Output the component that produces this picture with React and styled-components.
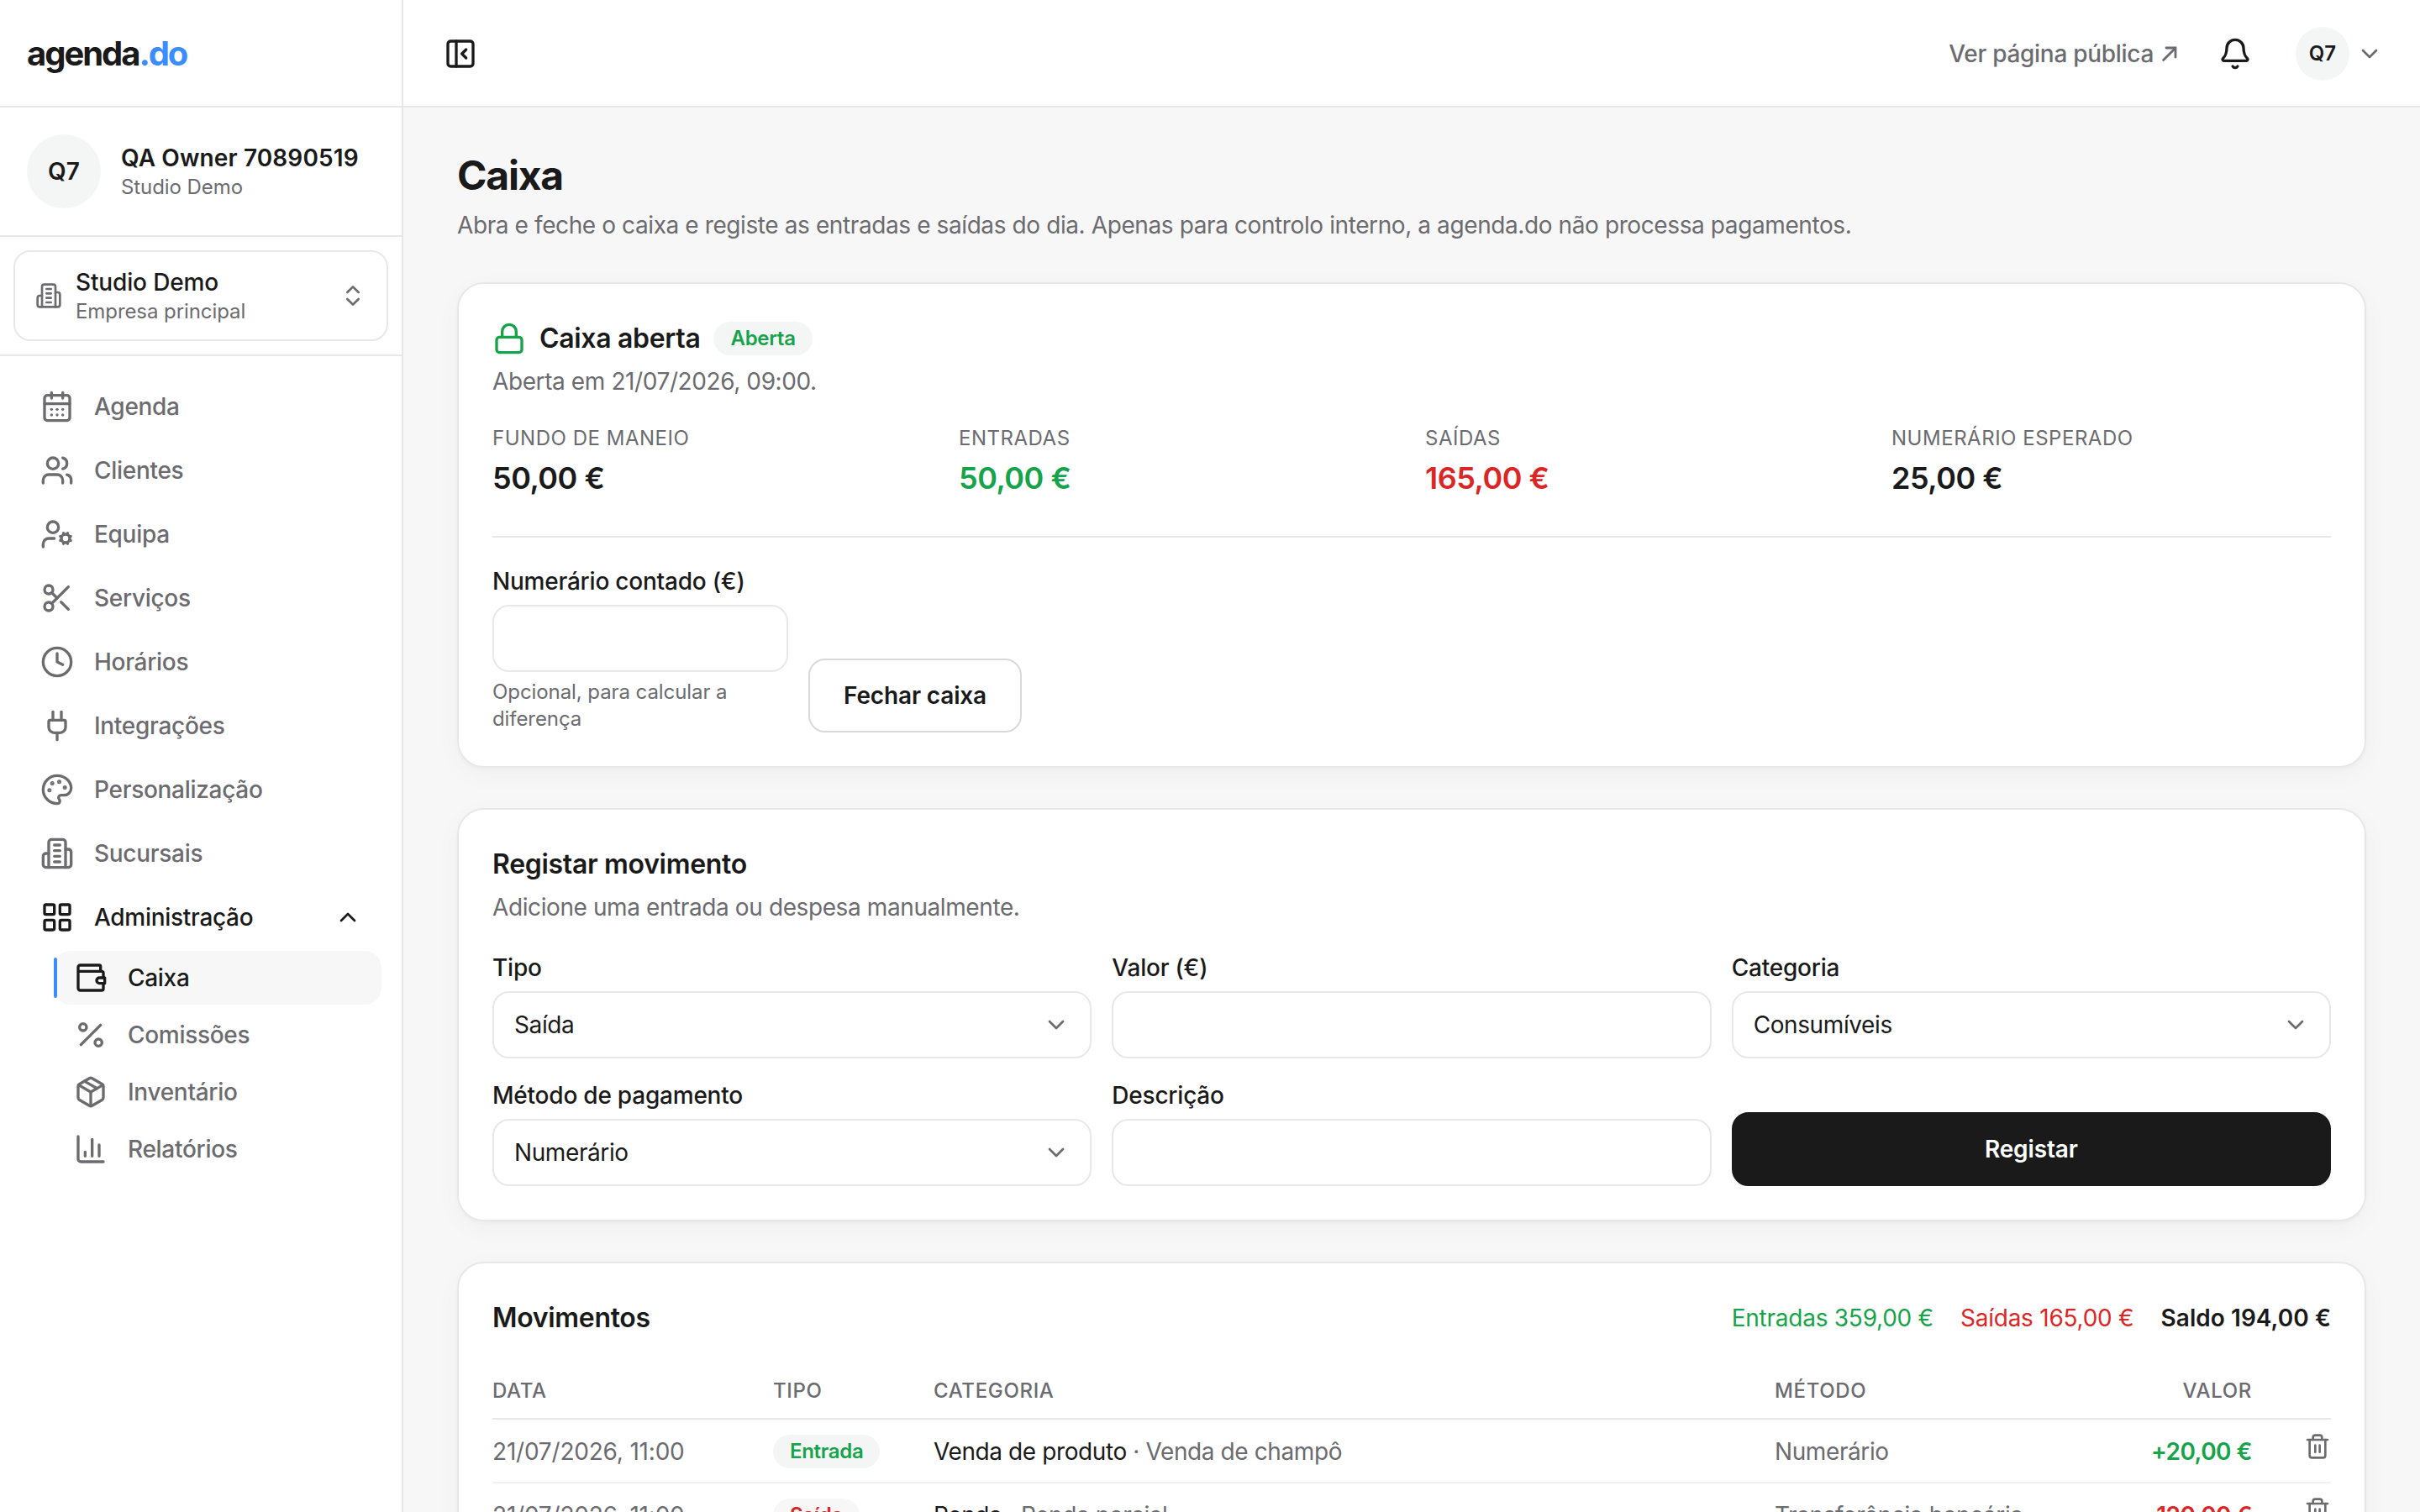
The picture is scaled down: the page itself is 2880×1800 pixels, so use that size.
import React from 'react';
import styled, { createGlobalStyle, css } from 'styled-components';
import {
  CalendarDays, Users, UserCog, Scissors, Clock, Plug, Palette, LayoutGrid,
  ChevronUp, ChevronDown, ChevronsUpDown, Percent, Package, PanelLeftClose, Bell, Lock, Trash2,
} from 'lucide-react';

const GlobalStyle = createGlobalStyle`
  *, *::before, *::after { box-sizing: border-box; }
  html, body { margin: 0; padding: 0; }
  body {
    width: 2880px;
    height: 1800px;
    overflow: hidden;
    background: #f7f7f7;
    color: #1a1a1a;
    font-family: Inter, "Liberation Sans", sans-serif;
    font-size: 28px;
    line-height: 40px;
    letter-spacing: -0.4px;
  }
  button, input { font: inherit; color: inherit; }
  h1, h2, p { margin: 0; }
  svg { display: block; flex: none; }
`;

const LINE = '#e8e8e8';
const MUTED = '#6b6b70';
const INK = '#1a1a1a';
const GREEN = '#16a34a';
const RED = '#dc2626';
const BLUE = '#3b8cff';

const tones = { ink: INK, green: GREEN, red: RED };

const Shell = styled.div`
  display: grid;
  grid-template-columns: 480px 1fr;
  height: 1800px;
`;

const Sidebar = styled.aside`
  display: flex;
  flex-direction: column;
  background: #fff;
  border-right: 2px solid ${LINE};
`;

const Brand = styled.div`
  display: flex;
  align-items: center;
  height: 128px;
  padding: 2px 32px 0;
  border-bottom: 2px solid ${LINE};
  font-size: 40px;
  font-weight: 700;
  letter-spacing: -2.05px;
  span { color: ${BLUE}; }
`;

const Profile = styled.div`
  display: flex;
  align-items: center;
  gap: 24px;
  padding: 32px;
  border-bottom: 2px solid ${LINE};
`;

const Avatar = styled.div`
  display: grid;
  place-items: center;
  flex: none;
  width: ${p => p.$size}px;
  height: ${p => p.$size}px;
  border-radius: 50%;
  background: #f4f6f6;
  font-size: ${p => p.$font}px;
  font-weight: 600;
  letter-spacing: 0;
`;

const Stack = styled.div`
  display: flex;
  flex-direction: column;
  flex: 1;
  min-width: 0;
  padding-top: 2px;
  white-space: nowrap;
`;

const Name = styled.div`
  font-size: 28px;
  line-height: 36px;
  font-weight: ${p => p.$weight};
  letter-spacing: ${p => (p.$weight > 500 ? '0.12px' : '-0.15px')};
`;

const Caption = styled.div`
  color: ${MUTED};
  font-size: 24px;
  line-height: 34px;
  letter-spacing: -0.08px;
`;

const BranchArea = styled.div`
  padding: 16px;
  border-bottom: 2px solid ${LINE};
`;

const BranchButton = styled.div`
  display: flex;
  align-items: center;
  gap: 16px;
  height: 108px;
  padding: 0 24px;
  border: 2px solid ${LINE};
  border-radius: 20px;
  svg { color: ${MUTED}; }
`;

const Nav = styled.nav`
  display: flex;
  flex-direction: column;
  gap: 4px;
  padding: 24px;
`;

const NavItem = styled.a`
  display: flex;
  align-items: center;
  gap: 24px;
  height: 72px;
  padding: 0 24px;
  color: ${p => (p.$active ? INK : MUTED)};
  font-weight: 500;
  letter-spacing: -0.3px;
  span { flex: 1; }
`;

const SubNav = styled.div`
  display: flex;
  flex-direction: column;
  gap: 4px;
  margin-left: 40px;
`;

const SubItem = styled(NavItem)`
  position: relative;
  height: 64px;
  border-radius: 20px;
  ${p => p.$active && css`
    background: #f7f7f7;
    &::before {
      content: '';
      position: absolute;
      left: 0;
      top: 8px;
      bottom: 8px;
      width: 4px;
      border-radius: 2px;
      background: ${BLUE};
    }
  `}
`;

const Main = styled.div`
  display: flex;
  flex-direction: column;
  min-width: 0;
  overflow: hidden;
`;

const TopBar = styled.header`
  display: flex;
  align-items: center;
  flex: none;
  height: 128px;
  padding: 0 44px 0 48px;
  background: #fff;
  box-shadow: inset 0 -2px 0 ${LINE};
`;

const PublicLink = styled.a`
  display: flex;
  align-items: center;
  gap: 10px;
  margin-left: auto;
  color: ${MUTED};
  font-weight: 500;
  letter-spacing: -0.3px;
`;

const BellButton = styled.div`
  margin: 0 52px 0 49px;
`;

const UserMenu = styled.div`
  display: flex;
  align-items: center;
  gap: 8px;
  svg { color: ${MUTED}; }
`;

const Content = styled.main`
  display: flex;
  flex-direction: column;
  gap: 48px;
  padding: 48px 64px 0;
`;

const PageHead = styled.div`
  height: 112px;
  padding-top: 1px;
`;

const PageTitle = styled.h1`
  font-size: 48px;
  line-height: 64px;
  font-weight: 700;
  letter-spacing: -0.025em;
`;

const PageText = styled.p`
  margin-top: 7px;
  color: ${MUTED};
  font-size: 28px;
  line-height: 40px;
`;

const Card = styled.section`
  flex: none;
  padding: 40px;
  border: 2px solid ${LINE};
  border-radius: 32px;
  background: #fff;
  box-shadow: 0 2px 4px rgba(0, 0, 0, 0.03), 0 8px 32px rgba(0, 0, 0, 0.03);
`;

const CardTitle = styled.h2`
  padding-top: 1px;
  font-size: 32px;
  line-height: 48px;
  font-weight: 600;
  letter-spacing: -0.01em;
`;

const CardText = styled.p`
  margin-top: 7px;
  color: ${MUTED};
  font-size: 28px;
  line-height: 40px;
`;

const StatusRow = styled.div`
  display: flex;
  align-items: center;
  gap: 16px;
  height: 49px;
  svg { color: ${GREEN}; }
`;

const Badge = styled.span`
  display: inline-flex;
  align-items: center;
  height: 40px;
  padding: 0 20px;
  border-radius: 20px;
  background: ${p => (p.$tone === 'red' ? '#f7f7f7' : '#f4f6f6')};
  color: ${p => tones[p.$tone]};
  font-size: 24px;
  font-weight: 600;
  letter-spacing: -0.3px;
`;

const Stats = styled.div`
  display: grid;
  grid-template-columns: repeat(4, 1fr);
  gap: 32px;
  height: 132px;
  margin-top: 32px;
`;

const StatLabel = styled.div`
  color: ${MUTED};
  font-size: 24px;
  line-height: 32px;
  letter-spacing: 0.52px;
  text-transform: uppercase;
`;

const StatValue = styled.div`
  margin-top: 7px;
  color: ${p => tones[p.$tone]};
  font-size: 36px;
  line-height: 48px;
  font-weight: 600;
  letter-spacing: -0.5px;
`;

const CloseRow = styled.div`
  display: flex;
  align-items: flex-end;
  gap: 24px;
  padding-top: 32px;
  border-top: 2px solid ${LINE};
`;

const Field = styled.div`
  display: flex;
  flex-direction: column;
  gap: 8px;
  width: ${p => p.$width || 'auto'};
`;

const Label = styled.label`
  font-weight: 500;
  line-height: 40px;
  letter-spacing: -0.22px;
`;

const Control = styled.div`
  display: flex;
  align-items: center;
  justify-content: space-between;
  height: 80px;
  padding: 0 24px;
  border: 2px solid ${LINE};
  border-radius: 20px;
  background: #fff;
  svg { color: ${MUTED}; }
`;

const Help = styled.div`
  color: ${MUTED};
  font-size: 24px;
  line-height: 32px;
  letter-spacing: -0.08px;
`;

const Button = styled.button`
  height: 88px;
  padding: 0 40px;
  border: 2px solid ${p => (p.$primary ? INK : '#d9d9d9')};
  border-radius: 20px;
  background: ${p => (p.$primary ? INK : '#fff')};
  color: ${p => (p.$primary ? '#fff' : INK)};
  font-size: 28px;
  font-weight: 600;
  letter-spacing: -0.15px;
`;

const FormGrid = styled.div`
  display: grid;
  grid-template-columns: repeat(3, 1fr);
  align-items: end;
  gap: 24px;
  margin-top: 32px;
`;

const MovesHead = styled.div`
  display: flex;
  align-items: center;
  justify-content: space-between;
  height: 49px;
`;

const Totals = styled.div`
  display: flex;
  gap: 32px;
`;

const Total = styled.span`
  color: ${p => tones[p.$tone]};
  font-weight: ${p => (p.$strong ? 600 : 400)};
  letter-spacing: ${p => (p.$strong ? '0.05px' : '-0.25px')};
`;

const Row = styled.div`
  display: grid;
  grid-template-columns: 334px 191px 1001px 1fr auto 32px;
  align-items: center;
  height: 76px;
  padding-top: 2px;
  border-bottom: 2px solid #f0f0f0;
  color: ${MUTED};
  white-space: nowrap;
`;

const HeadRow = styled(Row)`
  height: 67px;
  margin-top: 30px;
  padding-top: 1px;
  border-bottom-color: ${LINE};
  font-size: 24px;
  font-weight: 500;
  letter-spacing: 0.66px;
  text-transform: uppercase;
`;

const DateText = styled.span`
  letter-spacing: -0.2px;
`;

const TypeCell = styled.div`
  display: flex;
`;

const Category = styled.span`
  b { color: ${INK}; font-weight: 400; }
`;

const Amount = styled.span`
  margin-right: 62px;
  color: ${p => tones[p.$tone]};
  font-weight: 600;
  letter-spacing: -0.55px;
`;

const HeadAmount = styled.span`
  margin-right: 62px;
`;

const Trash = styled(Trash2)`
  margin-bottom: 12px;
`;

const Building = ({ size }) => (
  <svg width={size} height={size} viewBox="0 0 24 24" fill="none" stroke="currentColor" strokeWidth="2" strokeLinecap="round" strokeLinejoin="round">
    <path d="M6 22V4a2 2 0 0 1 2-2h8a2 2 0 0 1 2 2v18Z" />
    <path d="M6 12H4a2 2 0 0 0-2 2v6a2 2 0 0 0 2 2h2" />
    <path d="M18 9h2a2 2 0 0 1 2 2v9a2 2 0 0 1-2 2h-2" />
    <path d="M10 6h4M10 10h4M10 14h4M10 18h4" />
  </svg>
);

const WalletIcon = ({ size }) => (
  <svg width={size} height={size} viewBox="0 0 24 24" fill="none" stroke="currentColor" strokeWidth="2" strokeLinecap="round" strokeLinejoin="round">
    <path d="M19 7V4a1 1 0 0 0-1-1H4.500A1.500 1.500 0 0 0 3 4.500v15A1.500 1.500 0 0 0 4.500 21H20a1 1 0 0 0 1-1v-4" />
    <path d="M3.500 7.400H20a1 1 0 0 1 1 1V12" />
    <path d="M22 12h-3.800a2 2 0 0 0 0 4H22z" />
  </svg>
);

const ReportIcon = ({ size }) => (
  <svg width={size} height={size} viewBox="0 0 24 24" fill="none" stroke="currentColor" strokeWidth="2" strokeLinecap="round" strokeLinejoin="round">
    <path d="M3 3v16a2 2 0 0 0 2 2h16" />
    <path d="M13 17V5M18 17V9M8 17v-3" />
  </svg>
);

const OutArrow = () => (
  <svg width="18" height="18" viewBox="0 0 18 18" fill="none" stroke="currentColor" strokeWidth="2.8" strokeLinecap="round">
    <path d="M1.600 16.400L15.600 2.400" />
    <path d="M5 2h11v11" />
  </svg>
);

const navItems = [
  ['Agenda', CalendarDays],
  ['Clientes', Users],
  ['Equipa', UserCog],
  ['Serviços', Scissors],
  ['Horários', Clock],
  ['Integrações', Plug],
  ['Personalização', Palette],
  ['Sucursais', Building],
];

const subItems = [
  ['Caixa', WalletIcon],
  ['Comissões', Percent],
  ['Inventário', Package],
  ['Relatórios', ReportIcon],
];

const stats = [
  ['Fundo de maneio', '50,00 €', 'ink'],
  ['Entradas', '50,00 €', 'green'],
  ['Saídas', '165,00 €', 'red'],
  ['Numerário esperado', '25,00 €', 'ink'],
];

const moves = [
  { date: '21/07/2026, 11:00', type: 'Entrada', tone: 'green', category: 'Venda de produto', note: 'Venda de champô', method: 'Numerário', value: '+20,00 €' },
  { date: '21/07/2026, 11:00', type: 'Saída', tone: 'red', category: 'Renda', note: 'Renda parcial', method: 'Transferência bancária', value: '-120,00 €' },
];

const Select = ({ label, value }) => (
  <Field>
    <Label>{label}</Label>
    <Control>{value}<ChevronDown size={32} /></Control>
  </Field>
);

const TextField = ({ label, width, help }) => (
  <Field $width={width}>
    <Label>{label}</Label>
    <Control />
    {help && <Help>{help}</Help>}
  </Field>
);

export default function App() {
  return (
    <>
      <GlobalStyle />
      <Shell>
        <Sidebar>
          <Brand>agenda<span>.do</span></Brand>
          <Profile>
            <Avatar $size={88} $font={28}>Q7</Avatar>
            <Stack>
              <Name $weight={600}>QA Owner 70890519</Name>
              <Caption>Studio Demo</Caption>
            </Stack>
          </Profile>
          <BranchArea>
            <BranchButton>
              <Building size={32} />
              <Stack>
                <Name $weight={500}>Studio Demo</Name>
                <Caption>Empresa principal</Caption>
              </Stack>
              <ChevronsUpDown size={32} />
            </BranchButton>
          </BranchArea>
          <Nav>
            {navItems.map(([label, Icon]) => (
              <NavItem key={label}><Icon size={40} /><span>{label}</span></NavItem>
            ))}
            <NavItem $active>
              <LayoutGrid size={40} /><span>Administração</span><ChevronUp size={32} />
            </NavItem>
            <SubNav>
              {subItems.map(([label, Icon], i) => (
                <SubItem key={label} $active={i === 0}><Icon size={40} /><span>{label}</span></SubItem>
              ))}
            </SubNav>
          </Nav>
        </Sidebar>

        <Main>
          <TopBar>
            <PanelLeftClose size={40} />
            <PublicLink>Ver página pública<OutArrow /></PublicLink>
            <BellButton><Bell size={40} /></BellButton>
            <UserMenu>
              <Avatar $size={64} $font={24}>Q7</Avatar>
              <ChevronDown size={32} />
            </UserMenu>
          </TopBar>

          <Content>
            <PageHead>
              <PageTitle>Caixa</PageTitle>
              <PageText>Abra e feche o caixa e registe as entradas e saídas do dia. Apenas para controlo interno, a agenda.do não processa pagamentos.</PageText>
            </PageHead>

            <Card>
              <StatusRow>
                <Lock size={40} />
                <CardTitle>Caixa aberta</CardTitle>
                <Badge $tone="green">Aberta</Badge>
              </StatusRow>
              <CardText>Aberta em 21/07/2026, 09:00.</CardText>
              <Stats>
                {stats.map(([label, value, tone]) => (
                  <div key={label}>
                    <StatLabel>{label}</StatLabel>
                    <StatValue $tone={tone}>{value}</StatValue>
                  </div>
                ))}
              </Stats>
              <CloseRow>
                <TextField label="Numerário contado (€)" width="352px" help="Opcional, para calcular a diferença" />
                <Button>Fechar caixa</Button>
              </CloseRow>
            </Card>

            <Card>
              <CardTitle>Registar movimento</CardTitle>
              <CardText>Adicione uma entrada ou despesa manualmente.</CardText>
              <FormGrid>
                <Select label="Tipo" value="Saída" />
                <TextField label="Valor (€)" />
                <Select label="Categoria" value="Consumíveis" />
                <Select label="Método de pagamento" value="Numerário" />
                <TextField label="Descrição" />
                <Button $primary>Registar</Button>
              </FormGrid>
            </Card>

            <Card>
              <MovesHead>
                <CardTitle>Movimentos</CardTitle>
                <Totals>
                  <Total $tone="green">Entradas 359,00 €</Total>
                  <Total $tone="red">Saídas 165,00 €</Total>
                  <Total $tone="ink" $strong>Saldo 194,00 €</Total>
                </Totals>
              </MovesHead>
              <HeadRow>
                <span>Data</span><span>Tipo</span><span>Categoria</span><span>Método</span>
                <HeadAmount>Valor</HeadAmount>
              </HeadRow>
              {moves.map(m => (
                <Row key={m.type}>
                  <DateText>{m.date}</DateText>
                  <TypeCell><Badge $tone={m.tone}>{m.type}</Badge></TypeCell>
                  <Category><b>{m.category}</b> · {m.note}</Category>
                  <span>{m.method}</span>
                  <Amount $tone={m.tone}>{m.value}</Amount>
                  <Trash size={32} color={MUTED} />
                </Row>
              ))}
            </Card>
          </Content>
        </Main>
      </Shell>
    </>
  );
}
